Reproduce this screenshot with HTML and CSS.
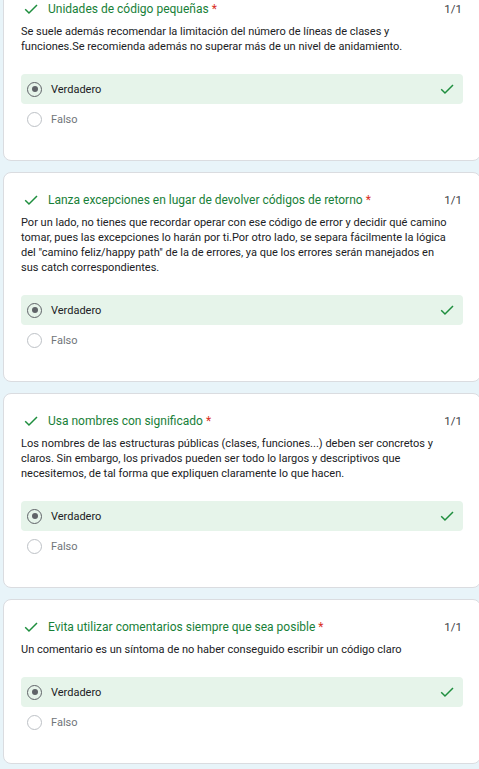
FILE: index.html
```html
<!DOCTYPE html>
<html lang="es">
<head>
<meta charset="utf-8">
<title>Cuestionario</title>
<link rel="stylesheet" href="styles.css">
</head>
<body>
<div class="page">
  <div class="list">

    <section class="card">
      <div class="q-head">
        <svg class="q-check" viewBox="0 0 16 16" width="16" height="16"><path d="M2.2 8.2 L6 12 L14 4" fill="none" stroke="#1e8e3e" stroke-width="1.5"/></svg>
        <span class="q-title">Unidades de código pequeñas <span class="req">*</span></span>
        <span class="q-score">1/1</span>
      </div>
      <p class="q-desc">Se suele además recomendar la limitación del número de líneas de clases y funciones.Se recomienda además no superar más de un nivel de anidamiento.</p>
      <div class="opts">
        <div class="opt opt-correct">
          <span class="radio radio-on"></span>
          <span class="opt-label">Verdadero</span>
          <svg class="opt-check" viewBox="0 0 16 16" width="16" height="16"><path d="M2.2 8.2 L6 12 L14 4" fill="none" stroke="#1e8e3e" stroke-width="1.5"/></svg>
        </div>
        <div class="opt">
          <span class="radio"></span>
          <span class="opt-label opt-muted">Falso</span>
        </div>
      </div>
    </section>

    <section class="card">
      <div class="q-head">
        <svg class="q-check" viewBox="0 0 16 16" width="16" height="16"><path d="M2.2 8.2 L6 12 L14 4" fill="none" stroke="#1e8e3e" stroke-width="1.5"/></svg>
        <span class="q-title">Lanza excepciones en lugar de devolver códigos de retorno <span class="req">*</span></span>
        <span class="q-score">1/1</span>
      </div>
      <p class="q-desc">Por un lado, no tienes que recordar operar con ese código de error y decidir qué camino tomar, pues las excepciones lo harán por ti.Por otro lado, se separa fácilmente la lógica del "camino feliz/happy path" de la de errores, ya que los errores serán manejados en sus catch correspondientes.</p>
      <div class="opts">
        <div class="opt opt-correct">
          <span class="radio radio-on"></span>
          <span class="opt-label">Verdadero</span>
          <svg class="opt-check" viewBox="0 0 16 16" width="16" height="16"><path d="M2.2 8.2 L6 12 L14 4" fill="none" stroke="#1e8e3e" stroke-width="1.5"/></svg>
        </div>
        <div class="opt">
          <span class="radio"></span>
          <span class="opt-label opt-muted">Falso</span>
        </div>
      </div>
    </section>

    <section class="card">
      <div class="q-head">
        <svg class="q-check" viewBox="0 0 16 16" width="16" height="16"><path d="M2.2 8.2 L6 12 L14 4" fill="none" stroke="#1e8e3e" stroke-width="1.5"/></svg>
        <span class="q-title">Usa nombres con significado <span class="req">*</span></span>
        <span class="q-score">1/1</span>
      </div>
      <p class="q-desc">Los nombres de las estructuras públicas (clases, funciones...) deben ser concretos y claros. Sin embargo, los privados pueden ser todo lo largos y descriptivos que necesitemos, de tal forma que expliquen claramente lo que hacen.</p>
      <div class="opts">
        <div class="opt opt-correct">
          <span class="radio radio-on"></span>
          <span class="opt-label">Verdadero</span>
          <svg class="opt-check" viewBox="0 0 16 16" width="16" height="16"><path d="M2.2 8.2 L6 12 L14 4" fill="none" stroke="#1e8e3e" stroke-width="1.5"/></svg>
        </div>
        <div class="opt">
          <span class="radio"></span>
          <span class="opt-label opt-muted">Falso</span>
        </div>
      </div>
    </section>

    <section class="card">
      <div class="q-head">
        <svg class="q-check" viewBox="0 0 16 16" width="16" height="16"><path d="M2.2 8.2 L6 12 L14 4" fill="none" stroke="#1e8e3e" stroke-width="1.5"/></svg>
        <span class="q-title">Evita utilizar comentarios siempre que sea posible <span class="req">*</span></span>
        <span class="q-score">1/1</span>
      </div>
      <p class="q-desc">Un comentario es un síntoma de no haber conseguido escribir un código claro</p>
      <div class="opts">
        <div class="opt opt-correct">
          <span class="radio radio-on"></span>
          <span class="opt-label">Verdadero</span>
          <svg class="opt-check" viewBox="0 0 16 16" width="16" height="16"><path d="M2.2 8.2 L6 12 L14 4" fill="none" stroke="#1e8e3e" stroke-width="1.5"/></svg>
        </div>
        <div class="opt">
          <span class="radio"></span>
          <span class="opt-label opt-muted">Falso</span>
        </div>
      </div>
    </section>

  </div>
</div>
</body>
</html>
```

FILE: styles.css
```css
html, body {
  margin: 0;
  padding: 0;
  background: #e8f4f9;
  overflow: hidden;
}

body {
  font-family: Roboto, "Liberation Sans", Arial, sans-serif;
  color: #202124;
}

.page {
  width: 479px;
  height: 769px;
  overflow: hidden;
}

.list {
  display: flex;
  flex-direction: column;
  gap: 11px;
  margin-top: -19px;
  margin-left: 3px;
}

.card {
  width: 478px;
  box-sizing: border-box;
  background: #ffffff;
  border: 1px solid #dadce0;
  border-radius: 8px;
  padding: 17px 17px 26px 17px;
}

.q-head {
  display: flex;
  align-items: center;
  height: 20px;
  padding-left: 2px;
}

.q-check {
  flex: none;
  width: 16px;
  height: 16px;
}

.q-title {
  flex: 1;
  margin-left: 9px;
  font-size: 12px;
  line-height: 20px;
  color: #188038;
  white-space: nowrap;
}

.req {
  color: #d93025;
}

.q-score {
  flex: none;
  font-size: 11.5px;
  line-height: 20px;
  color: #3c4043;
  padding-right: 1px;
}

.q-desc {
  margin: 5px 0 0 0;
  font-size: 11px;
  line-height: 15px;
  color: #202124;
  padding-right: 16px;
}

.opts {
  margin-top: 20px;
  display: flex;
  flex-direction: column;
}

.opt {
  display: flex;
  align-items: center;
  height: 30px;
  padding: 0 8px 0 6px;
  border-radius: 4px;
}

.opt-correct {
  background: #e6f4ea;
}

.radio {
  flex: none;
  box-sizing: border-box;
  width: 15px;
  height: 15px;
  border-radius: 50%;
  border: 1.5px solid #bdc1c6;
  display: flex;
  align-items: center;
  justify-content: center;
}

.radio-on {
  border-color: #5f6368;
}

.radio-on::after {
  content: "";
  width: 6px;
  height: 6px;
  border-radius: 50%;
  background: #5f6368;
}

.opt-label {
  flex: 1;
  margin-left: 9px;
  font-size: 11px;
  color: #202124;
}

.opt-muted {
  color: #70757a;
}

.opt-check {
  flex: none;
  width: 16px;
  height: 16px;
}
```
